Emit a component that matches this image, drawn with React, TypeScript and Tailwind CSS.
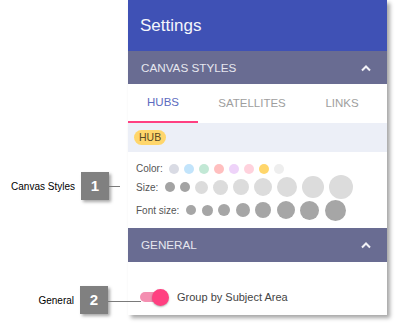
import React from "react";

const colorDots = ["#d9dbe4", "#c2e4fb", "#c2e8d5", "#ffbfbf", "#eed3f9", "#ffd2dd", "#ffd66b", "#eeeeee"];
const sizeDots = [
  { d: 10, c: "#a3a3a3" },
  { d: 10, c: "#a3a3a3" },
  { d: 13, c: "#dcdcdc" },
  { d: 15, c: "#dcdcdc" },
  { d: 16, c: "#dcdcdc" },
  { d: 18, c: "#dcdcdc" },
  { d: 20, c: "#dcdcdc" },
  { d: 22, c: "#dcdcdc" },
  { d: 24, c: "#dcdcdc" },
];
const fontDots = [10, 11, 12, 14, 16, 18, 19, 21];

function Chevron() {
  return (
    <svg width="12" height="8" viewBox="0 0 12 8" className="mr-[1px]">
      <path d="M2 6.5 L6 2.5 L10 6.5" fill="none" stroke="#f2f2f7" strokeWidth="2" />
    </svg>
  );
}

function Callout({ label, num, lineW, lineShift }: { label: string; num: string; lineW: number; lineShift?: boolean }) {
  return (
    <div className="flex items-center justify-end h-[28px]">
      <span className="text-[10px] text-black mr-[6px]">{label}</span>
      <div className="w-[28px] h-[28px] bg-[#808080] text-white font-bold text-[15px] flex items-center justify-center shadow-[2px_2px_3px_rgba(0,0,0,0.35)]">
        {num}
      </div>
      <div
        className={lineShift ? "relative z-10 h-px bg-[#7a7a7a] mt-[3px] mr-[-13px]" : "h-px bg-[#7a7a7a] mr-[8px]"}
        style={{ width: lineW }}
      />
    </div>
  );
}

export default function App() {
  return (
    <div className="w-[397px] h-[325px] bg-white flex font-['Liberation_Sans',Arial,sans-serif] overflow-hidden">
      {/* Callouts */}
      <div className="w-[128px] flex flex-col pt-[172px]">
        <Callout label="Canvas Styles" num="1" lineW={11} />
        <div className="h-[86px]" />
        <Callout label="General" num="2" lineW={33} lineShift />
      </div>

      {/* Panel */}
      <div className="w-[259px] h-[315px] bg-white flex flex-col shadow-[3px_3px_4px_rgba(0,0,0,0.35)]">
        <div className="h-[51px] bg-[#3f51b5] flex items-center pl-[12px]">
          <span className="text-[17px] text-[#f4f5fb]">Settings</span>
        </div>

        <div className="h-[33px] bg-[#696c92] flex items-center justify-between pl-[13px] pr-[14px]">
          <span className="text-[11.7px] text-[#e6e7ef]">CANVAS STYLES</span>
          <Chevron />
        </div>

        {/* Tabs */}
        <div className="h-[39px] flex text-[11.5px]">
          <div className="w-[70px] flex items-center justify-center text-[#5c6bc0] border-b-2 border-[#ff4081] pt-[1px]">HUBS</div>
          <div className="w-[108px] flex items-center justify-center text-[#9e9e9e] pt-[1px]">SATELLITES</div>
          <div className="w-[72px] flex items-center justify-center text-[#9e9e9e] pt-[1px]">LINKS</div>
        </div>

        <div className="h-[29px] bg-[#eceff7] flex items-center pl-[6px]">
          <span className="h-[15px] px-[5px] rounded-full bg-[#ffd66b] text-[10.5px] text-[#5a4a25] flex items-center">HUB</span>
        </div>

        {/* Style rows */}
        <div className="flex flex-col pt-[10px] pb-[7px] pl-[8px] text-[10px] text-[#555]">
          <div className="h-[13px] flex items-center">
            <span className="w-[33px]">Color:</span>
            <div className="flex gap-[5px]">
              {colorDots.map((c, i) => (
                <span key={i} className="w-[10px] h-[10px] rounded-full" style={{ background: c }} />
              ))}
            </div>
          </div>
          <div className="h-[24px] flex items-center">
            <span className="w-[29px]">Size:</span>
            <div className="flex items-center gap-[5px]">
              {sizeDots.map((s, i) => (
                <span key={i} className="rounded-full" style={{ width: s.d, height: s.d, background: s.c }} />
              ))}
            </div>
          </div>
          <div className="h-[22px] flex items-center">
            <span className="w-[50px]">Font size:</span>
            <div className="flex items-center gap-[5.5px]">
              {fontDots.map((d, i) => (
                <span key={i} className="rounded-full bg-[#a6a6a6]" style={{ width: d, height: d }} />
              ))}
            </div>
          </div>
        </div>

        <div className="h-[34px] bg-[#696c92] flex items-center justify-between pl-[13px] pr-[14px]">
          <span className="text-[11.7px] text-[#e6e7ef]">GENERAL</span>
          <Chevron />
        </div>

        <div className="flex-1 flex items-end pb-[8px] pl-[12px]">
          <div className="flex items-center h-[20px]">
            <div className="relative w-[28px] h-[16px] flex items-center">
              <div className="w-[27px] h-[10px] rounded-full bg-[#f48fb1]" />
              <div className="absolute right-[-1px] w-[17px] h-[17px] rounded-full bg-[#ff4081] shadow-[0_1px_2px_rgba(0,0,0,0.3)]" />
            </div>
            <span className="ml-[9px] text-[11px] text-[#444]">Group by Subject Area</span>
          </div>
        </div>
      </div>
    </div>
  );
}
